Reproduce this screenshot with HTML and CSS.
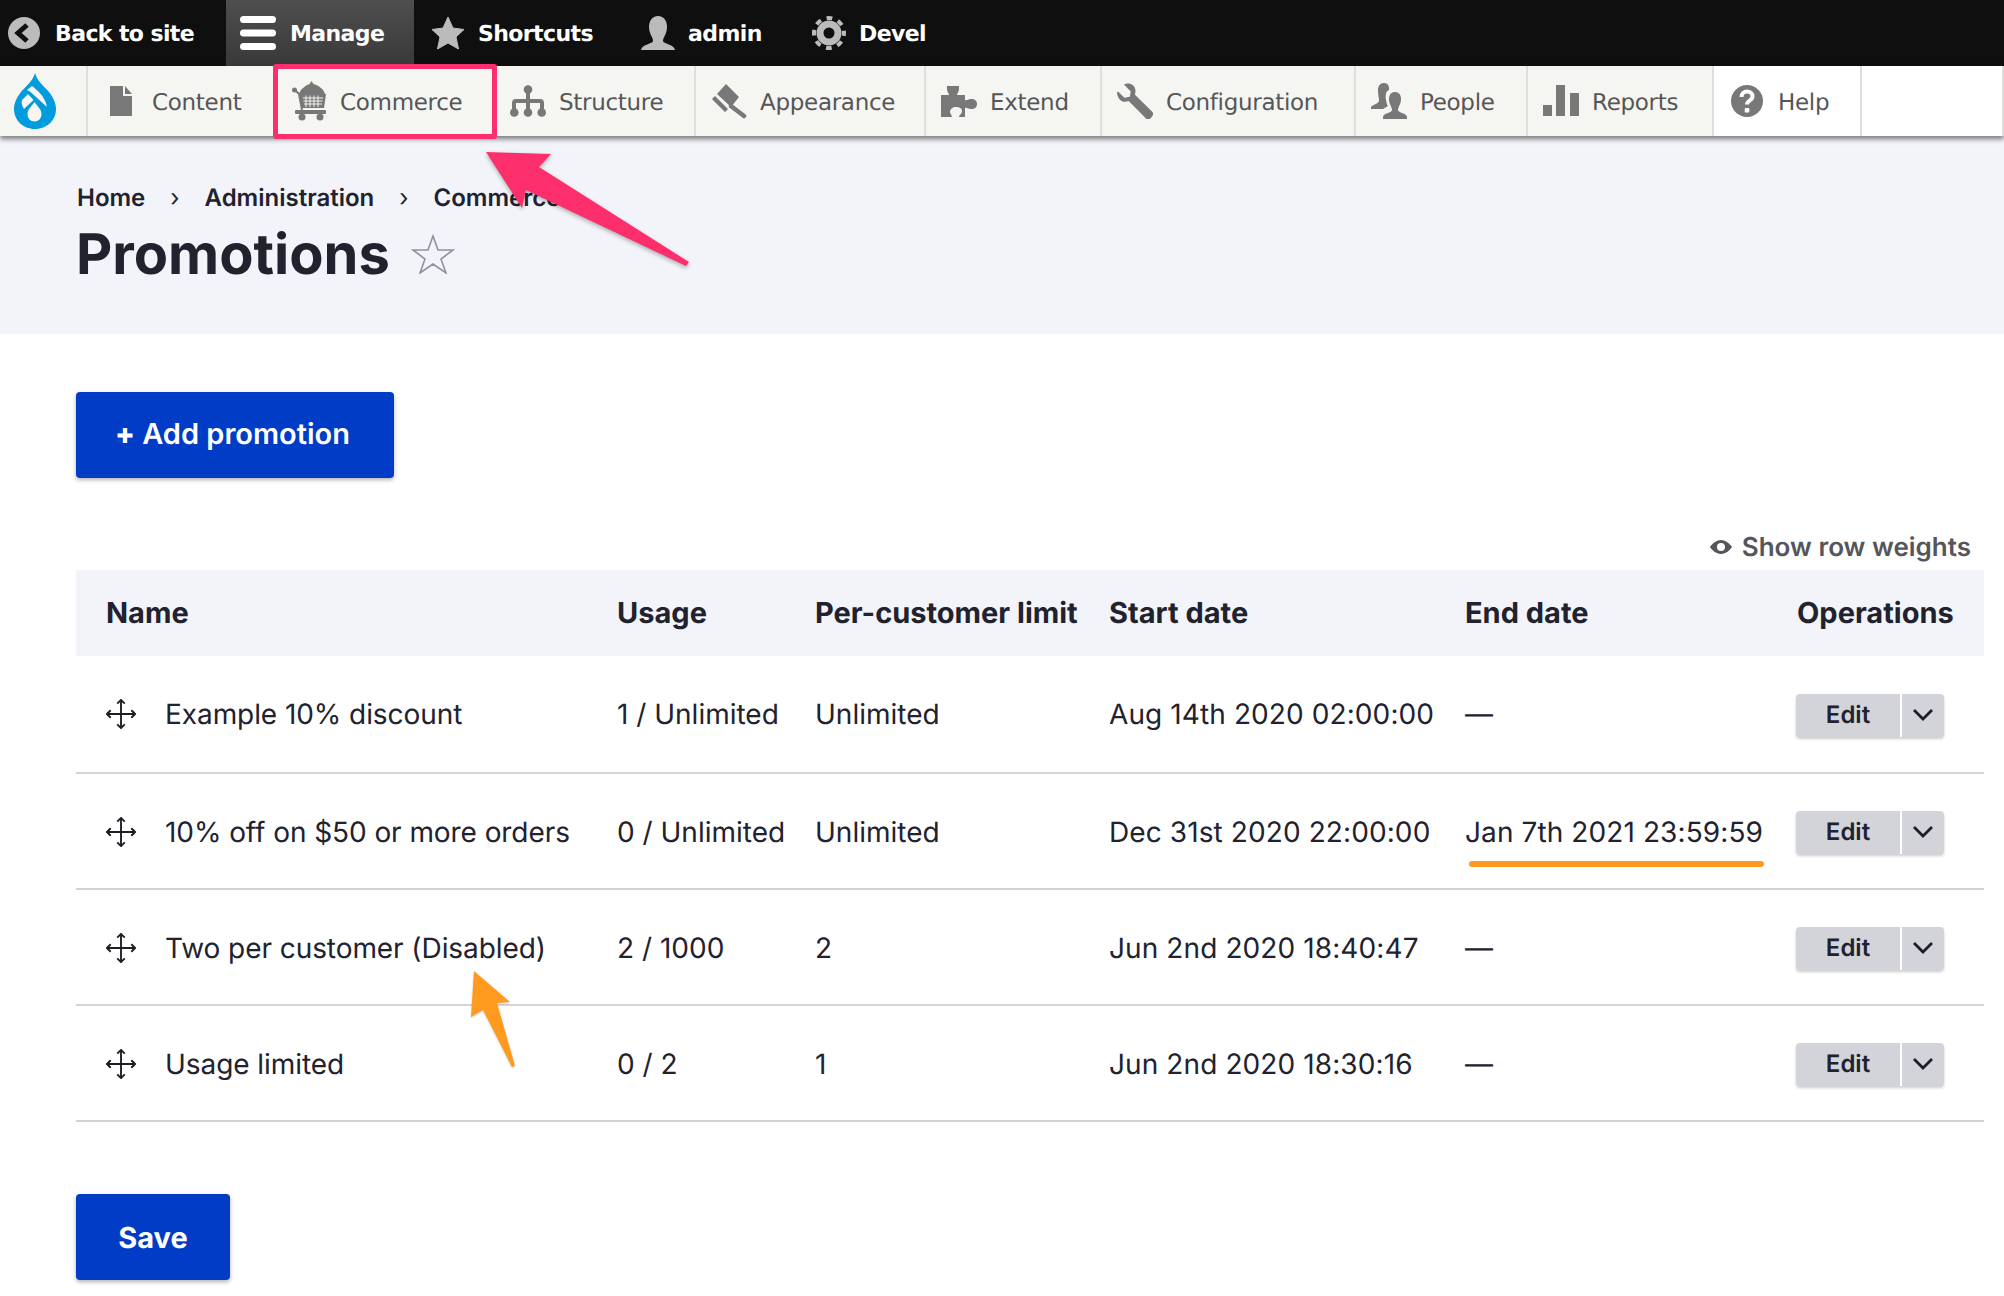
FILE: index.html
```html
<!DOCTYPE html>
<html lang="en">
<head>
<meta charset="utf-8">
<title>Promotions</title>
<link rel="stylesheet" href="styles.css">
</head>
<body>
<svg class="sprites" width="0" height="0">
  <symbol id="i-drag" viewBox="0 0 32 32">
    <path d="M16 1v30M1 16h30" fill="none" stroke="#1c1d26" stroke-width="2"/>
    <path d="M12 5l4-4 4 4M12 27l4 4 4-4M5 12l-4 4 4 4M27 12l4 4-4 4" fill="none" stroke="#1c1d26" stroke-width="2"/>
  </symbol>
  <symbol id="i-down" viewBox="0 0 20 14">
    <path d="M1 2l9 9 9-9" fill="none" stroke="#1c1d26" stroke-width="2.8"/>
  </symbol>
</svg>

<div class="topbar">
  <a class="top-item w-back">
    <svg class="top-icon" viewBox="0 0 32 32"><circle cx="16" cy="16" r="16" fill="#bbb"/><path d="M19 8l-9 8 9 8" fill="none" stroke="#0f0f0f" stroke-width="5"/></svg>
    Back to site
  </a>
  <a class="top-item w-manage">
    <svg class="top-icon burger" viewBox="0 0 36 34"><rect width="36" height="7" rx="3.5" fill="#fff"/><rect y="13.5" width="36" height="7" rx="3.5" fill="#fff"/><rect y="27" width="36" height="7" rx="3.5" fill="#fff"/></svg>
    Manage
  </a>
  <a class="top-item w-short">
    <svg class="top-icon" viewBox="0 0 34 34"><path d="M17 1l5 11 11 1.500-8 7.500 2.500 12L17 27 6.500 33 9 21 1 13.500 12 12z" fill="#bbb" stroke="#bbb" stroke-linejoin="round"/></svg>
    Shortcuts
  </a>
  <a class="top-item w-admin">
    <svg class="top-icon" viewBox="0 0 34 34"><path d="M17 0c6 0 9 5 9 11 0 7-4 10-4 14 0 3 11 3 12 9H0c1-6 12-6 12-9 0-4-4-7-4-14C8 5 11 0 17 0z" fill="#bbb"/></svg>
    admin
  </a>
  <a class="top-item w-devel">
    <svg class="top-icon gear" viewBox="0 0 34 34"><circle cx="17" cy="17" r="9" fill="none" stroke="#bbb" stroke-width="7"/><circle cx="17" cy="17" r="15" fill="none" stroke="#bbb" stroke-width="4" stroke-dasharray="5.800 5.980" stroke-dashoffset="2.900"/></svg>
    Devel
  </a>
</div>

<nav class="tray">
  <a class="logo">
    <svg viewBox="0 0 42 56" width="42" height="56">
      <path d="M21 0c2 8 9 13 14 19 4 5 7 11 7 17 0 11-9 20-21 20S0 47 0 36c0-6 3-12 7-17C12 13 19 8 21 0z" fill="#009cde"/>
      <path d="M18 13c5 4 13 10 15 21L16 18.500 13 17zM14 21l5.500 6L10 36c-2-3-3-6-2-9zM20.500 29c2.500 4 7 7 7 12 0 4.500-3 7.500-7 7.500s-7-3-7-7.500c0-5 4.500-8 7-12z" fill="#f5f5f2"/>
    </svg>
  </a>
  <a class="tray-item w-content">
    <svg class="tray-icon" viewBox="0 0 36 36"><path d="M7 3h13v10h9v20H7zM22 3l7 8h-7z" fill="#787878"/></svg>
    Content
  </a>
  <a class="tray-item w-commerce">
    <svg class="tray-icon cart" viewBox="0 0 34 40">
      <path d="M19.500 0l2 3c6.500 2 10.500 6 11.500 10H7c1-4 5.500-8 10.500-10z" fill="#787878"/>
      <path d="M7 13h27l-2 14H10z" fill="#787878"/>
      <path d="M11 17h20M11.500 20h19M12 23h18M14 14.500V26M18 14.500V26M22 14.500V26M26 14.500V26" stroke="#f5f5f2" stroke-width="1"/>
      <circle cx="2.500" cy="9" r="2.500" fill="#787878"/>
      <path d="M3 9l4 4 3 16" fill="none" stroke="#787878" stroke-width="2"/>
      <rect x="3" y="29" width="31" height="4" rx="1" fill="#787878"/>
      <circle cx="10" cy="36" r="3.500" fill="#787878"/><circle cx="28" cy="36" r="3.500" fill="#787878"/>
    </svg>
    Commerce
  </a>
  <a class="tray-item w-structure">
    <svg class="tray-icon" viewBox="0 0 36 32"><path d="M18 5v23M4 28V18q0-2 2-2h24q2 0 2 2v10" fill="none" stroke="#787878" stroke-width="4"/><circle cx="18" cy="4.500" r="4.300" fill="#787878"/><circle cx="4.300" cy="27.500" r="4.300" fill="#787878"/><circle cx="18" cy="27.500" r="4.300" fill="#787878"/><circle cx="31.700" cy="27.500" r="4.300" fill="#787878"/></svg>
    Structure
  </a>
  <a class="tray-item w-appearance">
    <svg class="tray-icon" viewBox="0 0 36 34"><path d="M15 0l13 13-8 10L6 10zM1 15l3-3 13 13-3 3z" fill="#787878"/><path d="M20 22l13 10" fill="none" stroke="#787878" stroke-width="4.500" stroke-linecap="round"/></svg>
    Appearance
  </a>
  <a class="tray-item w-extend">
    <svg class="tray-icon" viewBox="0 0 36 32"><path d="M0 10h8c0-2-2-3-2-6V1h12v3c0 3-2 4-2 6h8v5c2 1 3-1 6-1 4 0 6 2 6 5s-2 5-6 5c-3 0-4-2-6-1v9h-6c0-2 3-3 3-6s-3-4-6-4-6 2-6 5c0 2 2 3 2 5H0z" fill="#787878"/></svg>
    Extend
  </a>
  <a class="tray-item w-config">
    <svg class="tray-icon" viewBox="0 0 34 34"><path d="M7 1c4-1.500 9 0 10 4 1 3 0 5 0 6l16 16c2 2 1 4-1 6s-4 2-5 0L11 17c-3 1-6 1-8-1S0 11 0 9l1-1 6 6 5-1 1-5-6-6z" fill="#787878"/></svg>
    Configuration
  </a>
  <a class="tray-item w-people">
    <svg class="tray-icon" viewBox="0 0 36 36"><path d="M13 0c4 0 5.500 3 5 7-3 1-4 5-3 10 .5 3 1 5 2 6l-5 3H0v-2c1-2 7-3 8-6 0-4-1-6-1-11 0-4 2-7 6-7z" fill="#787878"/><path d="M24 9c4 0 6 3 6 7 0 5-3 8-3 11 0 3 9 3 9 7v2H12v-2c0-4 9-4 9-7 0-3-3-6-3-11 0-4 2-7 6-7z" fill="#787878"/></svg>
    People
  </a>
  <a class="tray-item w-reports">
    <svg class="tray-icon" viewBox="0 0 36 36"><path d="M0 22h9v11H0zM13 2h9v31h-9zM27 10h9v23h-9z" fill="#787878"/></svg>
    Reports
  </a>
  <a class="tray-item w-help">
    <svg class="tray-icon" viewBox="0 0 36 32"><circle cx="18" cy="16" r="16" fill="#787878"/><path d="M12.500 12c0-3.500 2.500-5.500 5.500-5.500s5.500 2 5.500 5c0 4-5.500 4-5.500 8" fill="none" stroke="#fff" stroke-width="4"/><rect x="15.700" y="23" width="4.600" height="4.600" rx="1" fill="#fff"/></svg>
    Help
  </a>
  <div class="tray-rest"></div>
</nav>

<header class="page-head">
  <ol class="crumbs">
    <li>Home</li>
    <li class="sep">›</li>
    <li>Administration</li>
    <li class="sep">›</li>
    <li>Commerce</li>
  </ol>
  <div class="title-row">
    <h1>Promotions</h1>
    <svg class="fav" viewBox="0 0 44 40"><path d="M22 2l5 14h15l-12 9 5 14-13-9-13 9 5-14L2 16h15z" fill="none" stroke="#8e929c" stroke-width="1.600"/></svg>
  </div>
</header>

<main class="content">
  <a class="btn add-btn"><span class="plus">+</span> Add promotion</a>

  <div class="weights">
    <svg class="eye" viewBox="0 0 22 14"><path fill-rule="evenodd" d="M11 0c5 0 9 4 11 7-2 3-6 7-11 7S2 10 0 7c2-3 6-7 11-7zm0 3a4 4 0 1 0 0 8 4 4 0 0 0 0-8z" fill="#55565b"/></svg>
    Show row weights
  </div>

  <table class="promos">
    <colgroup>
      <col class="c-name"><col class="c-usage"><col class="c-limit"><col class="c-start"><col class="c-end"><col class="c-ops">
    </colgroup>
    <thead>
      <tr><th class="name-h">Name</th><th>Usage</th><th>Per-customer limit</th><th>Start date</th><th>End date</th><th class="ops-h">Operations</th></tr>
    </thead>
    <tbody>
      <tr>
        <td><span class="name-cell"><svg class="drag"><use href="#i-drag"/></svg>Example 10% discount</span></td>
        <td>1 / Unlimited</td><td>Unlimited</td><td class="date">Aug 14th 2020 02:00:00</td><td>—</td>
        <td class="ops"><span class="dropbutton"><span class="db-edit">Edit</span><span class="db-toggle"><svg class="down"><use href="#i-down"/></svg></span></span></td>
      </tr>
      <tr>
        <td><span class="name-cell"><svg class="drag"><use href="#i-drag"/></svg>10% off on $50 or more orders</span></td>
        <td>0 / Unlimited</td><td>Unlimited</td><td class="date">Dec 31st 2020 22:00:00</td><td class="date">Jan 7th 2021 23:59:59</td>
        <td class="ops"><span class="dropbutton"><span class="db-edit">Edit</span><span class="db-toggle"><svg class="down"><use href="#i-down"/></svg></span></span></td>
      </tr>
      <tr>
        <td><span class="name-cell"><svg class="drag"><use href="#i-drag"/></svg>Two per customer (Disabled)</span></td>
        <td>2 / 1000</td><td>2</td><td class="date">Jun 2nd 2020 18:40:47</td><td>—</td>
        <td class="ops"><span class="dropbutton"><span class="db-edit">Edit</span><span class="db-toggle"><svg class="down"><use href="#i-down"/></svg></span></span></td>
      </tr>
      <tr>
        <td><span class="name-cell"><svg class="drag"><use href="#i-drag"/></svg>Usage limited</span></td>
        <td>0 / 2</td><td>1</td><td class="date">Jun 2nd 2020 18:30:16</td><td>—</td>
        <td class="ops"><span class="dropbutton"><span class="db-edit">Edit</span><span class="db-toggle"><svg class="down"><use href="#i-down"/></svg></span></span></td>
      </tr>
    </tbody>
  </table>

  <a class="btn save-btn">Save</a>
</main>

<!-- annotations drawn on top of the screenshot -->
<div class="pink-box"></div>
<svg class="marks" viewBox="0 0 2004 1296" width="2004" height="1296">
  <polygon class="pink-arrow" points="486,152 551,154 539,167 689,262 686,266 526,190 522,208"/>
  <polygon class="orange-arrow" points="474,971 510,1002 497,1003 515,1066 512,1067 483,1010 471,1017"/>
  <path class="orange-line" d="M1472 864 H1761"/>
</svg>
</body>
</html>
```

FILE: styles.css
```css
html, body {
    margin: 0;
    padding: 0;
    background: #fff;
}
body {
    position: relative;
    height: 1296px;
    overflow: hidden;
    font-family: Inter, "Liberation Sans", sans-serif;
    color: #22222f;
    text-rendering: geometricPrecision;
}
.sprites {
    position: absolute;
}

/* toolbar */
.topbar {
    height: 66px;
    background: #0f0f0f;
    display: flex;
    color: #fff;
    font: bold 22px "DejaVu Sans", sans-serif;
    letter-spacing: -0.6px;
}
.top-item {
    display: flex;
    align-items: center;
    gap: 13px;
    padding: 2px 0 0 17px;
    box-sizing: border-box;
}
.w-back { width: 226px; padding-left: 8px; gap: 15px; }
.w-manage {
    width: 188px;
    padding-left: 14px;
    gap: 14px;
    background: linear-gradient(#4e4e4e, #393939);
}
.w-short { width: 210px; }
.w-admin { width: 171px; }
.w-devel { gap: 13px; }
.top-icon {
    width: 34px;
    height: 34px;
    margin-top: -2px;
}
.w-back .top-icon { width: 32px; height: 32px; }
.top-icon.burger { width: 36px; }

.tray {
    height: 70px;
    display: flex;
    box-shadow: 0 3px 5px rgba(0, 0, 0, .5);
    position: relative;
    font: 23px "DejaVu Sans", sans-serif;
    letter-spacing: -0.3px;
    color: #565656;
}
.logo {
    width: 88px;
    display: flex;
    align-items: center;
    padding-left: 14px;
    box-sizing: border-box;
    background: #f5f5f2;
    border-right: 2px solid #dedfdc;
}
.tray-item {
    display: flex;
    align-items: center;
    gap: 13px;
    padding: 3px 0 0 15px;
    box-sizing: border-box;
    background: #f5f5f2;
    border-right: 2px solid #dedfdc;
}
.tray-icon {
    width: 36px;
    height: 36px;
    margin-top: -3px;
}
.tray-icon.cart {
    height: 40px;
}
.w-content { width: 188px; }
.w-commerce { width: 219px; }
.w-structure { width: 201px; }
.w-appearance { width: 230px; }
.w-extend { width: 176px; }
.w-config { width: 254px; }
.w-people { width: 172px; }
.w-reports { width: 186px; }
.w-help { width: 148px; background: #fff; }
.tray-rest {
    flex: 1;
    background: #fff;
    border-right: 2px solid #dedfdc;
}

/* page head */
.page-head {
    height: 198px;
    background: #f2f4f9;
    padding: 40px 77px 0;
    box-sizing: border-box;
}
.crumbs {
    list-style: none;
    margin: 0;
    padding: 0;
    display: flex;
    gap: 25px;
    font-size: 24px;
    font-weight: 600;
    line-height: 44px;
}
.crumbs .sep {
    font-weight: 400;
}
.title-row {
    display: flex;
    align-items: center;
    gap: 21px;
}
h1 {
    margin: 0 0 0 -1px;
    font-size: 56px;
    font-weight: 700;
    line-height: 68px;
}
.fav {
    width: 44px;
    height: 40px;
}

/* content */
.content {
    padding: 58px 20px 0 76px;
}
.btn {
    display: block;
    height: 86px;
    line-height: 86px;
    text-align: center;
    background: #003cc5;
    color: #fff;
    font-size: 29px;
    font-weight: 600;
    border-radius: 4px;
    box-shadow: 0 2px 4px rgba(0, 0, 0, .3);
}
.add-btn {
    width: 313px;
    padding-right: 5px;
    line-height: 84px;
}
.plus {
    font-weight: 800;
}
.save-btn {
    width: 154px;
    margin-top: 72px;
    line-height: 88px;
    font-weight: 700;
}
.weights {
    display: flex;
    justify-content: flex-end;
    align-items: center;
    gap: 10px;
    height: 34px;
    margin-top: 50px;
    margin-bottom: 6px;
    padding: 2px 13px 0 0;
    font-size: 26px;
    font-weight: 600;
    color: #55565b;
}
.eye {
    width: 22px;
    height: 14px;
}
.promos {
    width: 1908px;
    table-layout: fixed;
    border-collapse: collapse;
    font-size: 28px;
}
.c-name { width: 541px; }
.c-usage { width: 198px; }
.c-limit { width: 294px; }
.c-start { width: 356px; }
.c-end { width: 331px; }
.c-ops { width: 188px; }
th {
    height: 84px;
    padding: 0 0 2px;
    background: #f2f4f9;
    text-align: left;
    font-size: 29px;
    font-weight: 700;
}
.name-h {
    padding-left: 30px;
}
.ops-h {
    padding-left: 1px;
}
td {
    height: 112px;
    padding: 2px 0 0;
    border-bottom: 2px solid #d3d4d9;
    white-space: nowrap;
}
tbody tr:first-child td {
    height: 116px;
    padding-top: 0;
}
tbody tr:first-child td.ops {
    height: 114px;
    padding-top: 2px;
}
.date {
    letter-spacing: .1px;
}
.name-cell {
    display: flex;
    align-items: center;
    gap: 29px;
    padding-left: 30px;
    letter-spacing: -.07px;
}
.drag {
    width: 30px;
    height: 30px;
}
.dropbutton {
    display: flex;
    width: 148px;
    height: 43px;
    background: #d3d4d9;
    border-radius: 4px;
    box-shadow: 0 2px 3px rgba(0, 0, 0, .2);
    font-size: 24px;
    font-weight: 600;
}
.db-edit {
    width: 104px;
    text-align: center;
    line-height: 42px;
    border-right: 2px solid #fff;
}
.db-toggle {
    flex: 1;
    display: flex;
    align-items: center;
    justify-content: center;
}
.down {
    width: 20px;
    height: 14px;
}

/* annotations */
.pink-box {
    position: absolute;
    left: 273px;
    top: 64px;
    width: 224px;
    height: 75px;
    box-sizing: border-box;
    border: 5px solid #fd2e6c;
    border-radius: 3px;
}
.marks {
    position: absolute;
    left: 0;
    top: 0;
}
.pink-arrow {
    fill: #fd2e6c;
    filter: drop-shadow(0 2px 2px rgba(0, 0, 0, .3));
}
.orange-arrow {
    fill: #ff9a1f;
    filter: drop-shadow(0 1px 1px rgba(0, 0, 0, .2));
}
.orange-line {
    fill: none;
    stroke: #ff9a1f;
    stroke-width: 6;
    stroke-linecap: round;
}
```
